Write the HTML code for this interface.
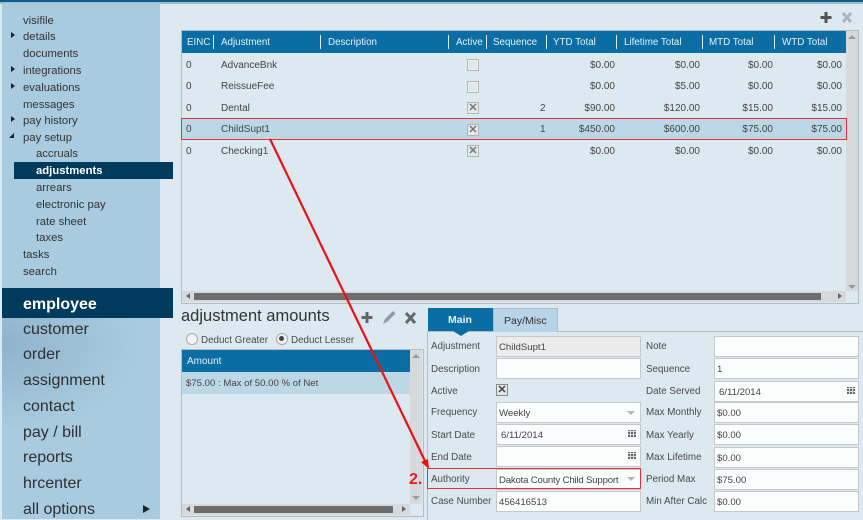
<!DOCTYPE html>
<html><head><meta charset="utf-8">
<style>
html,body{margin:0;padding:0}
body{width:863px;height:519px;overflow:hidden;position:relative;background:#dce9f1;font-family:"Liberation Sans",sans-serif;font-size:10px;color:#3a3a3a}
div,span{position:absolute;white-space:nowrap}
.n{left:23px;font-size:11.3px;line-height:14px;color:#333;margin-top:1px}
.s{left:36px;font-size:11.3px;line-height:14px;color:#333;margin-top:1px}
.m{left:23px;font-size:16px;line-height:20px;color:#2f2f2f;margin-top:3px}
.tri{width:0;height:0;border-left:4px solid #222;border-top:3.5px solid transparent;border-bottom:3.5px solid transparent;left:11px}
.h{top:32px;height:22px;line-height:22px;color:#e6f1f7;font-size:9.8px}
.sep{top:35px;width:1px;height:14px;background:#dce9f1}
.c{line-height:12px;color:#444;margin-top:1px}
.r{line-height:12px;color:#444;text-align:right;width:60px;margin-top:1px}
.cb{left:467px;width:10px;height:10px;border:1px solid #b4b4b4;background:#e2e6e8;box-shadow:inset 0 0 0 1px #f0f0f0}
.cbx{left:467px;width:10px;height:10px;border:1px solid #b4b4b4;background:#e4e8ea;color:#777;font-size:11px;font-weight:bold;line-height:10px;text-align:center}
.l{line-height:12px;color:#4a4a4a;margin-top:2px;font-size:9.8px}
.i{height:19px;border:1px solid #c6c9ca;background:#fbfcfc;line-height:22px;color:#444;box-sizing:content-box;padding-left:2px;font-size:9.6px}
.c1{left:496px;width:141px}
.c2{left:714px;width:141px}
.cal{width:8px;height:7px;background:repeating-linear-gradient(90deg,transparent 0 2px,#d8dcde 2px 3px),repeating-linear-gradient(0deg,#666 0 2px,#d8dcde 2px 3px)}
.drop{width:0;height:0;border-top:4px solid #b5b5b5;border-left:4px solid transparent;border-right:4px solid transparent}
</style></head><body>
<div style="left:0;top:0;width:863px;height:2px;background:#0e5f8e"></div>
<div style="left:0;top:2px;width:863px;height:2px;background:#9fb9c8"></div>
<div style="left:2px;top:3px;width:158px;height:516px;background:#a8cbdf"></div>
<div style="left:2px;top:318px;width:158px;height:130px;background:radial-gradient(ellipse at 0% 20%,#8fb3cb 0,#a8cbdf 60%)"></div>

<div class="n" style="top:13px">visifile</div>
<div class="tri" style="top:32px"></div><div class="n" style="top:29px">details</div>
<div class="n" style="top:46px">documents</div>
<div class="tri" style="top:66px"></div><div class="n" style="top:63px">integrations</div>
<div class="tri" style="top:83px"></div><div class="n" style="top:80px">evaluations</div>
<div class="n" style="top:97px">messages</div>
<div class="tri" style="top:116px"></div><div class="n" style="top:113px">pay history</div>
<div style="left:9px;top:133px;width:0;height:0;border-bottom:5px solid #222;border-left:5px solid transparent"></div><div class="n" style="top:130px">pay setup</div>
<div class="s" style="top:146px">accruals</div>
<div style="left:14px;top:162px;width:159px;height:17px;background:#003a5c"></div>
<div class="s" style="top:163px;color:#fff;font-weight:bold">adjustments</div>
<div class="s" style="top:180px">arrears</div>
<div class="s" style="top:197px">electronic pay</div>
<div class="s" style="top:214px">rate sheet</div>
<div class="s" style="top:230px">taxes</div>
<div class="n" style="top:247px">tasks</div>
<div class="n" style="top:264px">search</div>

<div style="left:2px;top:288px;width:171px;height:30px;background:#003a5c"></div>
<div class="m" style="top:292px;color:#fff;font-weight:bold">employee</div>
<div class="m" style="top:317px">customer</div>
<div class="m" style="top:342px">order</div>
<div class="m" style="top:368px">assignment</div>
<div class="m" style="top:394px">contact</div>
<div class="m" style="top:420px">pay / bill</div>
<div class="m" style="top:445px">reports</div>
<div class="m" style="top:471px">hrcenter</div>
<div class="m" style="top:497px">all options</div>
<div style="left:143px;top:505px;width:0;height:0;border-left:7px solid #222;border-top:4px solid transparent;border-bottom:4px solid transparent"></div>

<!-- top icons -->
<svg style="position:absolute;left:819px;top:11px" width="40" height="14"><path d="M7 1v11M1.500 6.500h11" stroke="#555" stroke-width="3"/><path d="M24 2l8 9M32 2l-8 9" stroke="#a9b4ba" stroke-width="3"/></svg>

<!-- grid -->
<div style="left:181px;top:30px;width:676px;height:272px;border:1px solid #b5bcc0;box-sizing:content-box"></div>
<div style="left:182px;top:31px;width:664px;height:22px;background:#0a6ea5"></div>
<div style="left:846px;top:31px;width:12px;height:260px;background:#d6dadd"></div>
<div style="left:848px;top:35px;width:0;height:0;border-bottom:4px solid #999;border-left:4px solid transparent;border-right:4px solid transparent"></div>
<div style="left:848px;top:285px;width:0;height:0;border-top:4px solid #999;border-left:4px solid transparent;border-right:4px solid transparent"></div>
<div style="left:182px;top:291px;width:664px;height:11px;background:#d6dadd"></div>
<div style="left:194px;top:293px;width:627px;height:7px;background:#6d6d6d"></div>
<div style="left:186px;top:293px;width:0;height:0;border-right:4px solid #666;border-top:3.500px solid transparent;border-bottom:3.500px solid transparent"></div>
<div style="left:838px;top:293px;width:0;height:0;border-left:4px solid #666;border-top:3.500px solid transparent;border-bottom:3.500px solid transparent"></div>

<div class="h" style="left:187px">EINC</div>
<div class="h" style="left:221px">Adjustment</div>
<div class="h" style="left:328px">Description</div>
<div class="h" style="left:456px">Active</div>
<div class="h" style="left:493px">Sequence</div>
<div class="h" style="left:553px">YTD Total</div>
<div class="h" style="left:624px">Lifetime Total</div>
<div class="h" style="left:709px">MTD Total</div>
<div class="h" style="left:782px">WTD Total</div>
<div class="sep" style="left:213px"></div><div class="sep" style="left:320px"></div><div class="sep" style="left:448px"></div><div class="sep" style="left:486px"></div><div class="sep" style="left:546px"></div><div class="sep" style="left:616px"></div><div class="sep" style="left:702px"></div><div class="sep" style="left:774px"></div>

<div style="left:182px;top:118px;width:664px;height:22px;background:#bcd7e6"></div>

<div class="c" style="left:186px;top:59px">0</div><div class="c" style="left:221px;top:59px">AdvanceBnk</div><div class="cb" style="top:59px"></div>
<div class="r" style="left:555px;top:59px">$0.00</div><div class="r" style="left:640px;top:59px">$0.00</div><div class="r" style="left:713px;top:59px">$0.00</div><div class="r" style="left:782px;top:59px">$0.00</div>

<div class="c" style="left:186px;top:80px">0</div><div class="c" style="left:221px;top:80px">ReissueFee</div><div class="cb" style="top:81px"></div>
<div class="r" style="left:555px;top:80px">$0.00</div><div class="r" style="left:640px;top:80px">$5.00</div><div class="r" style="left:713px;top:80px">$0.00</div><div class="r" style="left:782px;top:80px">$0.00</div>

<div class="c" style="left:186px;top:102px">0</div><div class="c" style="left:221px;top:102px">Dental</div><div class="cbx" style="top:102px">✕</div>
<div class="c" style="left:540px;top:102px">2</div>
<div class="r" style="left:555px;top:102px">$90.00</div><div class="r" style="left:640px;top:102px">$120.00</div><div class="r" style="left:713px;top:102px">$15.00</div><div class="r" style="left:782px;top:102px">$15.00</div>

<div class="c" style="left:186px;top:123px">0</div><div class="c" style="left:221px;top:123px">ChildSupt1</div><div class="cbx" style="top:124px">✕</div>
<div class="c" style="left:540px;top:123px">1</div>
<div class="r" style="left:555px;top:123px">$450.00</div><div class="r" style="left:640px;top:123px">$600.00</div><div class="r" style="left:713px;top:123px">$75.00</div><div class="r" style="left:782px;top:123px">$75.00</div>

<div class="c" style="left:186px;top:145px">0</div><div class="c" style="left:221px;top:145px">Checking1</div><div class="cbx" style="top:145px">✕</div>
<div class="r" style="left:555px;top:145px">$0.00</div><div class="r" style="left:640px;top:145px">$0.00</div><div class="r" style="left:713px;top:145px">$0.00</div><div class="r" style="left:782px;top:145px">$0.00</div>

<div style="left:181px;top:118px;width:666px;height:22px;border:1px solid #e8303c;box-sizing:border-box"></div>

<!-- adjustment amounts -->
<div style="left:181px;top:307px;font-size:16.500px;line-height:19px;color:#333">adjustment amounts</div>
<svg style="position:absolute;left:360px;top:310px" width="60" height="16"><path d="M7 2v11M1.500 7.500h11" stroke="#666" stroke-width="3"/><path d="M23 14l2-5 8-8 2.500 2.500-8 8z" fill="#8f9ca3"/><path d="M46 3l9 10M55 3l-9 10" stroke="#666" stroke-width="3"/></svg>
<div style="left:186px;top:333px;width:10px;height:10px;border:1px solid #aaa;border-radius:50%;background:#f2f2f2"></div>
<div class="l" style="left:201px;top:333px">Deduct Greater</div>
<div style="left:276px;top:333px;width:10px;height:10px;border:1px solid #aaa;border-radius:50%;background:#f2f2f2"></div>
<div style="left:279px;top:336px;width:5px;height:5px;border-radius:50%;background:#444"></div>
<div class="l" style="left:291px;top:333px">Deduct Lesser</div>

<div style="left:181px;top:349px;width:241px;height:166px;border:1px solid #b5bcc0"></div>
<div style="left:182px;top:350px;width:228px;height:22px;background:#0a6ea5"></div>
<div style="left:187px;top:351px;line-height:22px;color:#e6f1f7">Amount</div>
<div style="left:182px;top:372px;width:228px;height:22px;background:#bcd7e6"></div>
<div style="left:186px;top:378px;line-height:12px;color:#444;font-size:9.6px">$75.00 : Max of 50.00 % of Net</div>
<div style="left:410px;top:350px;width:12px;height:154px;background:#d6dadd"></div>
<div style="left:412px;top:354px;width:0;height:0;border-bottom:4px solid #999;border-left:4px solid transparent;border-right:4px solid transparent"></div>
<div style="left:412px;top:496px;width:0;height:0;border-top:4px solid #999;border-left:4px solid transparent;border-right:4px solid transparent"></div>
<div style="left:182px;top:504px;width:228px;height:11px;background:#d6dadd"></div>
<div style="left:194px;top:506px;width:199px;height:7px;background:#6d6d6d"></div>
<div style="left:186px;top:506px;width:0;height:0;border-right:4px solid #666;border-top:3.500px solid transparent;border-bottom:3.500px solid transparent"></div>
<div style="left:402px;top:506px;width:0;height:0;border-left:4px solid #666;border-top:3.500px solid transparent;border-bottom:3.500px solid transparent"></div>

<!-- tabs -->
<div style="left:427px;top:331px;width:436px;height:188px;border-left:1px solid #b5bcc0;border-top:1px solid #b5bcc0"></div>
<div style="left:493px;top:308px;width:63px;height:23px;background:#b8d4e6;border:1px solid #aebcc4;border-bottom:0"></div>
<div style="left:504px;top:314px;line-height:14px;font-size:10.500px;color:#333">Pay/Misc</div>
<div style="left:428px;top:308px;width:65px;height:23px;background:#0a6ea5"></div>
<div style="left:453px;top:331px;width:0;height:0;border-top:5px solid #0a6ea5;border-left:8px solid transparent;border-right:8px solid transparent"></div>
<div style="left:448px;top:313px;line-height:14px;font-size:10.500px;font-weight:bold;color:#e6f1f7">Main</div>

<!-- column 1 -->
<div class="l" style="left:431px;top:339px">Adjustment</div>
<div class="i c1" style="top:336px;background:#ececec">ChildSupt1</div>
<div class="l" style="left:431px;top:362px">Description</div>
<div class="i c1" style="top:358px"></div>
<div class="l" style="left:431px;top:384px">Active</div>
<div style="left:496px;top:384px;width:10px;height:10px;border:1px solid #888;background:#e4e8ea;color:#444;font-size:11px;font-weight:bold;line-height:10px;text-align:center">✕</div>
<div class="l" style="left:431px;top:405px">Frequency</div>
<div class="i c1" style="top:402px">Weekly</div><div class="drop" style="left:627px;top:411px"></div>
<div class="l" style="left:431px;top:428px">Start Date</div>
<div class="i c1" style="top:424px;padding-left:4px;width:139px">6/11/2014</div><div class="cal" style="left:628px;top:430px"></div>
<div class="l" style="left:431px;top:450px">End Date</div>
<div class="i c1" style="top:446px"></div><div class="cal" style="left:628px;top:452px"></div>
<div class="l" style="left:431px;top:472px">Authority</div>
<div class="i c1" style="top:469px;letter-spacing:-0.18px">Dakota County Child Support</div><div class="drop" style="left:627px;top:477px"></div>
<div class="l" style="left:431px;top:494px">Case Number</div>
<div class="i c1" style="top:491px">456416513</div>

<!-- column 2 -->
<div class="l" style="left:646px;top:339px">Note</div>
<div class="i c2" style="top:336px"></div>
<div class="l" style="left:646px;top:362px">Sequence</div>
<div class="i c2" style="top:358px">1</div>
<div class="l" style="left:646px;top:384px">Date Served</div>
<div class="i c2" style="top:381px;padding-left:4px;width:139px">6/11/2014</div><div class="cal" style="left:847px;top:387px"></div>
<div class="l" style="left:646px;top:405px">Max Monthly</div>
<div class="i c2" style="top:402px">$0.00</div>
<div class="l" style="left:646px;top:428px">Max Yearly</div>
<div class="i c2" style="top:424px">$0.00</div>
<div class="l" style="left:646px;top:450px">Max Lifetime</div>
<div class="i c2" style="top:447px">$0.00</div>
<div class="l" style="left:646px;top:472px">Period Max</div>
<div class="i c2" style="top:469px">$75.00</div>
<div class="l" style="left:646px;top:494px">Min After Calc</div>
<div class="i c2" style="top:491px">$0.00</div>

<!-- annotations -->
<div style="left:427px;top:468px;width:214px;height:21px;border:1px solid #e8303c;box-sizing:border-box"></div>
<div style="left:409px;top:471px;font-size:16px;line-height:18px;font-weight:bold;color:#ed1c24">2.</div>
<svg style="position:absolute;left:0;top:0" width="863" height="519"><path d="M270 139L425 461" stroke="#ee1111" stroke-width="2.200" fill="none"/><path d="M429 469L421 462L428 459Z" fill="#ee1111"/></svg>
</body></html>
